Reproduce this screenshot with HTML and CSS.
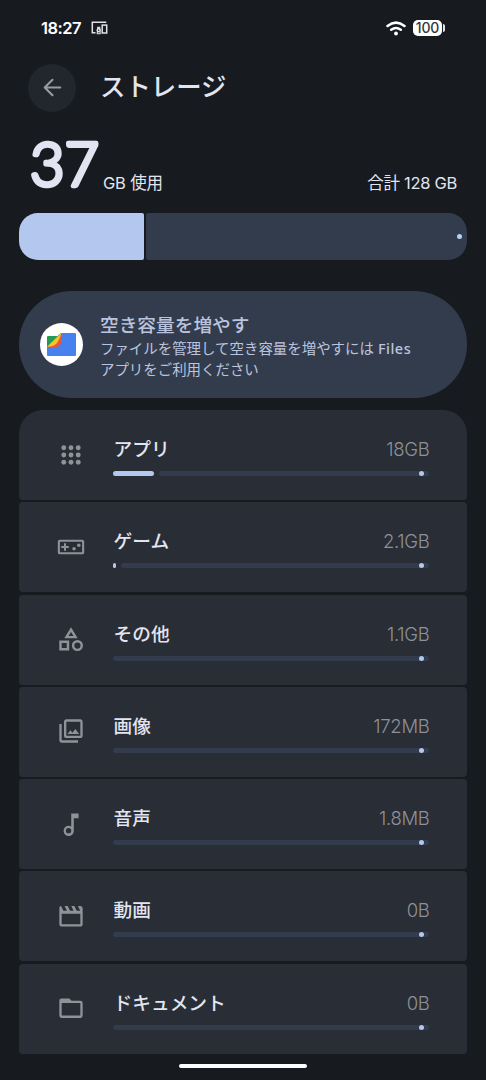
FILE: index.html
```html
<!DOCTYPE html>
<html lang="ja">
<head>
<meta charset="utf-8">
<title>ストレージ</title>
<link rel="stylesheet" href="styles.css">
</head>
<body>
<header class="status">
  <span class="time">18:27</span>
  <svg class="cast" viewBox="0 0 17 14" fill="none" stroke="currentColor" stroke-width="1.5"><path d="M15.3 1.300H1.300V11.700H4.500"/><rect x="11.200" y="4.100" width="4.500" height="7.900"/><circle cx="7.700" cy="9.300" r="1.500"/><path d="M6.300 10.500V12.800H9.100V10.500M6.700 8.500V6.400H8.700V8.500" stroke-width="1.100"/></svg>
  <svg class="wifi" viewBox="0 0 20 15" fill="none" stroke="currentColor" stroke-width="2.500" stroke-linecap="round"><path d="M1.500 5Q10-1.700 18.500 5M5.200 8.800Q10 5.100 14.800 8.800"/><circle cx="10" cy="12.500" r="1.900" fill="currentColor" stroke="none"/></svg>
  <span class="battery">100</span><span class="battery-tip"></span>
</header>
<div class="titlebar">
  <div class="back"><svg viewBox="0 0 20 20" fill="none" stroke="currentColor" stroke-width="2.200" stroke-linecap="round" stroke-linejoin="round"><path d="M18.200 10H2M10 1.900L1.800 10L10 18.100"/></svg></div>
  <h1>ストレージ</h1>
</div>
<section class="usage">
  <svg class="used" viewBox="0 0 72 60"><text x="1" y="53.500" textLength="69" lengthAdjust="spacingAndGlyphs">37</text></svg>
  <span class="unit">GB 使用</span>
  <span class="total">合計 128 GB</span>
</section>
<div class="capacity"><div class="capacity-used"></div><div class="capacity-free"><i></i></div></div>
<section class="promo">
  <div class="files-logo"><svg viewBox="0 0 29 23"><path d="M14 0H28Q29 0 29 1V22Q29 23 28 23H1Q0 23 0 22V12Z" fill="#4681ed"/><path d="M1 3H10.500L0 14V4Q0 3 1 3Z" fill="#249b50"/><path d="M14.500 0V8Q13.500 14.500 7 14.500L0 13.800Z" fill="#e4573a"/><path d="M14.500 0L0 13.800Q6 14 9.500 10.500Q12.500 7 14.500 0Z" fill="#fac32b"/></svg></div>
  <div class="promo-text"><h2>空き容量を増やす</h2><p>ファイルを管理して空き容量を増やすには <span class="brand">Files</span><br>アプリをご利用ください</p></div>
</section>
<main class="list">
  <div class="row">
    <svg class="icon" viewBox="0 0 24 24" fill="currentColor"><circle cx="5.800" cy="5.800" r="2.100"/><circle cx="12" cy="5.800" r="2.100"/><circle cx="18.200" cy="5.800" r="2.100"/><circle cx="5.800" cy="12" r="2.100"/><circle cx="12" cy="12" r="2.100"/><circle cx="18.200" cy="12" r="2.100"/><circle cx="5.800" cy="18.200" r="2.100"/><circle cx="12" cy="18.200" r="2.100"/><circle cx="18.200" cy="18.200" r="2.100"/></svg>
    <div class="info"><div class="line"><span>アプリ</span><span class="size">18GB</span></div><div class="bar"><b class="fill apps"></b><span class="track"><i></i></span></div></div>
  </div>
  <div class="row">
    <svg class="icon" viewBox="0 0 24 24" fill="currentColor"><path fill-rule="evenodd" d="M2.300 5.700H21.700Q23.300 5.700 23.300 7.300V16.700Q23.300 18.300 21.700 18.300H2.300Q.7 18.300 .7 16.700V7.300Q.7 5.700 2.300 5.700ZM2.500 7.500V16.500H21.500V7.500Z"/><path d="M6 8.800H7.700V11.200H10.100V12.800H7.700V15.200H6V12.800H3.600V11.200H6Z"/><circle cx="14.600" cy="13.400" r="1.500"/><circle cx="18.700" cy="10.500" r="1.500"/></svg>
    <div class="info"><div class="line"><span>ゲーム</span><span class="size">2.1GB</span></div><div class="bar"><b class="fill games"></b><span class="track"><i></i></span></div></div>
  </div>
  <div class="row">
    <svg class="icon" viewBox="0 0 24 24" fill="none" stroke="currentColor" stroke-width="2.100"><path d="M12 4L8.100 10.400H15.900Z"/><path d="M3 14.400H9.400V20.800H3Z"/><circle cx="17.500" cy="17.600" r="3.700"/></svg>
    <div class="info"><div class="line"><span>その他</span><span class="size">1.1GB</span></div><div class="bar"><span class="track"><i></i></span></div></div>
  </div>
  <div class="row">
    <svg class="icon" viewBox="0 0 24 24" fill="currentColor"><path d="M20 4v12H8V4h12m0-2H8c-1.100 0-2 .9-2 2v12c0 1.100.9 2 2 2h12c1.100 0 2-.9 2-2V4c0-1.100-.9-2-2-2zM9 14.500l2.500-3.100 1.700 2.100 2.500-3.200 3.300 4.200zM2 6v14c0 1.100.9 2 2 2h14v-2H4V6H2z"/></svg>
    <div class="info"><div class="line"><span>画像</span><span class="size">172MB</span></div><div class="bar"><span class="track"><i></i></span></div></div>
  </div>
  <div class="row">
    <svg class="icon" viewBox="0 0 24 24" fill="currentColor"><path fill-rule="evenodd" d="M12.200 3H18.500V7H14.400V17.700A4.400 4.400 0 1 1 12.200 14.100ZM9.900 15.400A2.300 2.300 0 1 0 9.900 20A2.300 2.300 0 1 0 9.900 15.400Z"/></svg>
    <div class="info"><div class="line"><span>音声</span><span class="size">1.8MB</span></div><div class="bar"><span class="track"><i></i></span></div></div>
  </div>
  <div class="row">
    <svg class="icon" viewBox="0 0 24 24" fill="currentColor"><path d="M3.500 3.500l2 4h3l-2-4h2.700l2 4h3l-2-4h2.700l2 4h3l-2-4H20c1.100 0 2 .9 2 2v13.500c0 1.100-.9 2-2 2H4c-1.100 0-2-.9-2-2V5.500c0-1.100.5-1.700 1.500-2zm.5 6.500V19h16V10z"/></svg>
    <div class="info"><div class="line"><span>動画</span><span class="size">0B</span></div><div class="bar"><span class="track"><i></i></span></div></div>
  </div>
  <div class="row">
    <svg class="icon" viewBox="0 0 24 24" fill="currentColor"><path fill-rule="evenodd" d="M4 3.800H10.500L12.500 5.800H20Q22 5.800 22 7.800V18.500Q22 20.500 20 20.500H4Q2 20.500 2 18.500V5.800Q2 3.800 4 3.800ZM4 7.700V18.500H20V7.700Z"/></svg>
    <div class="info"><div class="line"><span>ドキュメント</span><span class="size">0B</span></div><div class="bar"><span class="track"><i></i></span></div></div>
  </div>
</main>
<div class="home"></div>
</body>
</html>
```
FILE: styles.css
```css
* { box-sizing: border-box; }
body { margin: 0; width: 486px; height: 1080px; overflow: hidden; padding: 0 19px; background: #171b20; color: #e2e5f1; font-family: Inter, "Noto Sans CJK JP", sans-serif; }
h1, h2, p { margin: 0; }
svg { display: block; flex: none; }

.status { height: 56px; display: flex; align-items: center; padding: 0 22px; color: #fff; }
.time { width: 50px; font: 600 16.500px/20px Inter, sans-serif; letter-spacing: -.5px; white-space: nowrap; }
.cast { width: 17px; height: 14px; color: #dfe3e7; }
.wifi { width: 20px; height: 15px; margin-left: auto; }
.battery { width: 29px; height: 16px; margin-left: 7px; border-radius: 5px; background: #fff; color: #33373b; font: 500 14px/16px Inter, sans-serif; letter-spacing: -.2px; text-align: center; }
.battery-tip { width: 2px; height: 8px; margin-left: 1px; border-radius: 0 2px 2px 0; background: #e3e5e7; }

.titlebar { height: 63px; display: flex; align-items: center; padding-left: 9px; }
.back { width: 48px; height: 48px; border-radius: 50%; display: grid; place-items: center; background: #22272d; color: #989ca2; }
.back svg { width: 19px; height: 19px; }
h1 { margin: 0 0 1px 24px; font-size: 25.400px; font-weight: 500; line-height: 36px; }

.usage { height: 94px; display: flex; align-items: flex-end; padding: 0 10px 17px; }
.used { width: 72px; height: 60px; margin-bottom: 4px; overflow: visible; }
.used text { font: 300 61px Lato, sans-serif; fill: #e2e5f1; stroke: #e2e5f1; stroke-width: 4.500px; stroke-linejoin: round; }
.unit, .total { margin-bottom: 1px; font-size: 16.500px; line-height: 24px; letter-spacing: -.2px; }
.unit { margin-left: 2px; }
.total { margin-left: auto; letter-spacing: -.3px; }

.capacity { height: 47px; display: flex; gap: 2px; }
.capacity-used { width: 125px; border-radius: 19px 2px 2px 19px; background: #b4c8ef; }
.capacity-free { flex: 1; display: flex; align-items: center; justify-content: flex-end; padding-right: 5px; border-radius: 2px 19px 19px 2px; background: #333c4c; }
.capacity i { width: 5px; height: 5px; border-radius: 50%; background: #b4d0fa; }

.promo { height: 107px; margin-top: 31px; padding: 0 21px; display: flex; align-items: center; gap: 17px; border-radius: 53px; background: #333c4c; color: #bbc4df; }
.promo-text { padding-top: 5px; }
.files-logo { width: 43px; height: 43px; border-radius: 50%; background: #fff; display: grid; place-items: center; }
.files-logo svg { width: 29px; height: 23px; }
h2 { font-size: 18.700px; line-height: 24px; font-weight: 500; }
p { margin-top: 1px; font-size: 14.450px; line-height: 20.500px; white-space: nowrap; }
.brand { font-family: "Noto Sans", sans-serif; font-weight: 500; letter-spacing: .5px; }

.list { margin-top: 12px; display: flex; flex-direction: column; gap: 2.260px; }
.row { height: 90px; display: flex; padding: 0 38px; border-radius: 4px; background: #292d35; }
.row:first-child { border-radius: 24px 24px 4px 4px; }
.icon { width: 28px; height: 28px; margin-top: 30.500px; color: #8e9299; }
.info { flex: 1; margin-left: 28px; padding-top: 26px; }
.line { height: 28px; display: flex; justify-content: space-between; padding-left: .6px; font-size: 18.700px; font-weight: 500; line-height: 28px; }
.size { color: #8d9199; font-size: 18.500px; font-weight: 350; letter-spacing: -.3px; line-height: 26px; margin-right: -.5px; }
.bar { height: 5px; margin-top: 7px; display: flex; }
.fill { height: 5px; border-radius: 3px; background: #b4c8ef; margin-right: 5px; }
.apps { width: 41px; }
.games { width: 3px; }
.track { flex: 1; display: flex; justify-content: flex-end; padding-right: 5px; border-radius: 3px; background: #333c4c; }
.track i { width: 5px; height: 5px; border-radius: 50%; background: #b4c8ef; }
.home { width: 128px; height: 4px; margin: 10.500px auto 0; border-radius: 2px; background: #fff; }
```
